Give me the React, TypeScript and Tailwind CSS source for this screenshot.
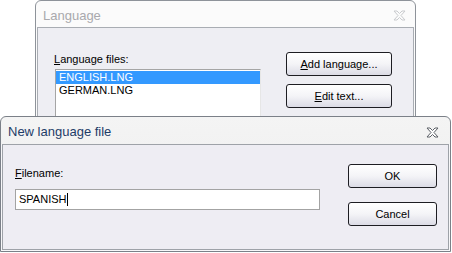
const font = { fontFamily: '"Liberation Sans", Arial, sans-serif' };

const CloseGlyph = ({ active }: { active: boolean }) => (
  <svg width="13" height="11" viewBox="0 0 13 11" className="block">
    <polygon
      points="1,1 4,1 6.5,3.5 9,1 12,1 8,5.5 12,10 9,10 6.5,7.5 4,10 1,10 5,5.5"
      fill={active ? '#ffffff' : '#fbfbfb'}
      stroke={active ? '#5c6067' : '#c9cbce'}
      strokeWidth="1"
      strokeLinejoin="miter"
    />
  </svg>
);

const XpButton = ({
  children,
  className = '',
}: {
  children: React.ReactNode;
  className?: string;
}) => (
  <button
    type="button"
    className={`h-[24px] rounded-[3px] border border-[#1d1d22] bg-gradient-to-b from-[#ffffff] via-[#f4f4f7] to-[#dcdce6] text-[11px] text-black flex items-center justify-center leading-none ${className}`}
  >
    {children}
  </button>
);

export default function App() {
  return (
    <div className="relative w-[452px] h-[253px] bg-white overflow-hidden" style={font}>
      {/* Back window: Language (inactive) */}
      <div className="absolute left-[35px] top-0 w-[381px] h-[150px] border border-[#8e939a] rounded-t-[6px] bg-[#fbfbfb] flex flex-col">
        <div className="h-[27px] flex items-center justify-between pl-[7px] pr-[9px] pt-[3px]">
          <span className="text-[13px] text-[#a9a9ad]">Language</span>
          <CloseGlyph active={false} />
        </div>
        <div className="flex-1 mx-[1px] border-t border-x border-[#a9adb3] bg-[#eeeef3] flex">
          <div className="pl-[16px] pt-[25px] flex flex-col">
            <span className="text-[11px] text-black leading-[13px]">
              <u>L</u>anguage files:
            </span>
            <div className="mt-[3px] ml-[1px] w-[206px] h-[80px] bg-white border-t border-l border-[#a5a5a5] border-r border-r-[#e6e6e6] pt-[1px] text-[11px] leading-[13px]">
              <div className="bg-[#3399ff] text-white pl-[3px] h-[13px]">ENGLISH.LNG</div>
              <div className="text-black pl-[3px] h-[13px]">GERMAN.LNG</div>
            </div>
          </div>
          <div className="ml-[25px] pt-[24px] flex flex-col gap-[8px]">
            <XpButton className="w-[106px]">
              <span><u>A</u>dd language...</span>
            </XpButton>
            <XpButton className="w-[106px]">
              <span><u>E</u>dit text...</span>
            </XpButton>
          </div>
        </div>
      </div>

      {/* Front window: New language file (active) */}
      <div className="absolute left-0 top-[116px] w-[451px] h-[136px] border border-[#7b8088] rounded-t-[6px] bg-gradient-to-b from-[#f4f4f4] to-[#ebebeb] flex flex-col">
        <div className="h-[27px] flex items-center justify-between pl-[7px] pr-[11px] pt-[3px]">
          <span className="text-[13px] text-[#1e3c68]">New language file</span>
          <CloseGlyph active />
        </div>
        <div className="flex-1 px-[1px] pb-[1px] bg-[#f7f7f9] flex">
          <div className="flex-1 border border-[#9ea2a8] bg-[#eeedf3] flex">
            <div className="pl-[12px] pt-[22px] flex flex-col">
              <span className="text-[11px] text-black leading-[13px]">
                <u>F</u>ilename:
              </span>
              <div className="mt-[9px] w-[305px] h-[21px] bg-white border border-[#a3a3a3] flex items-center pl-[3px] text-[11px] text-black">
                <span>SPANISH</span>
                <span className="w-px h-[13px] bg-black ml-[1px]" />
              </div>
            </div>
            <div className="ml-auto mr-[11px] pt-[19px] flex flex-col gap-[14px]">
              <XpButton className="w-[89px]">OK</XpButton>
              <XpButton className="w-[89px]">Cancel</XpButton>
            </div>
          </div>
        </div>
      </div>
    </div>
  );
}
